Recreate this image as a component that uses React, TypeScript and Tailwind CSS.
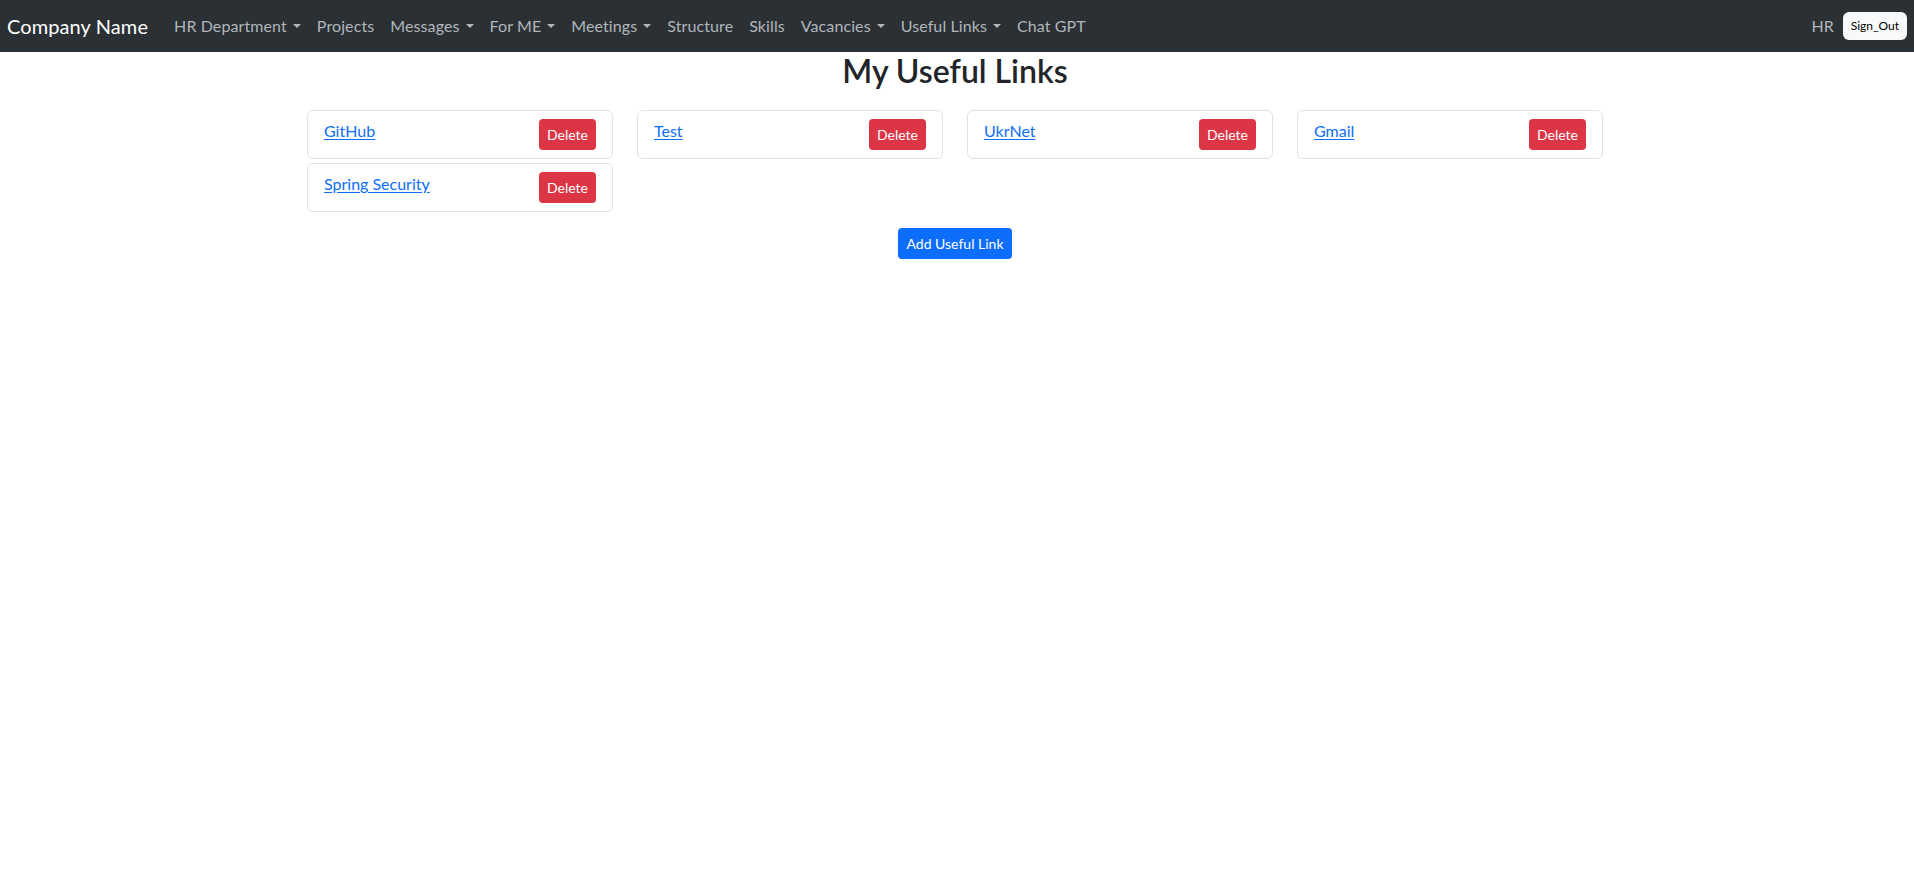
import React from 'react';

const NAV_ITEMS: { label: string; dropdown?: boolean }[] = [
  { label: 'HR Department', dropdown: true },
  { label: 'Projects' },
  { label: 'Messages', dropdown: true },
  { label: 'For ME', dropdown: true },
  { label: 'Meetings', dropdown: true },
  { label: 'Structure' },
  { label: 'Skills' },
  { label: 'Vacancies', dropdown: true },
  { label: 'Useful Links', dropdown: true },
  { label: 'Chat GPT' },
];

const LINKS = ['GitHub', 'Test', 'UkrNet', 'Gmail', 'Spring Security'];

const Caret = () => (
  <span className="ml-[6px] inline-block align-[4px] w-0 h-0 border-t-[4px] border-x-[4px] border-x-transparent border-t-current" />
);

const Navbar = () => (
  <nav className="h-[52px] bg-[#2b3035] flex items-center justify-between px-[7px]">
    <div className="flex items-center">
      <a href="#" className="text-[20px] leading-[30px] text-white mr-[18px] tracking-[0.1px]">
        Company Name
      </a>
      <ul className="flex items-center">
        {NAV_ITEMS.map(item => (
          <li key={item.label}>
            <a href="#" className="block px-2 text-[16px] leading-6 text-[#b1b6ba] tracking-[0.1px]">
              {item.label}
              {item.dropdown && <Caret />}
            </a>
          </li>
        ))}
      </ul>
    </div>
    <div className="flex items-center">
      <span className="text-[16px] leading-6 text-[#b1b6ba]">HR</span>
      <button className="ml-[9px] h-[28px] px-2 rounded-[6px] bg-[#f8f9fa] text-black text-[12px] font-normal">
        Sign_Out
      </button>
    </div>
  </nav>
);

const LinkCard = ({ name }: { name: string }) => (
  <div className="border border-[#dee2e6] rounded-[6px] bg-white px-4 py-2 flex justify-between items-start">
    <a href="#" className="text-[16px] leading-6 text-[#0d6efd] underline underline-offset-[2px]">
      {name}
    </a>
    <button className="h-[31px] px-2 rounded-[4px] bg-[#dc3545] text-white text-[14px]">
      Delete
    </button>
  </div>
);

export default function App() {
  return (
    <div className="min-h-screen bg-white font-['Lato','Noto_Sans',sans-serif] text-[#212529]">
      <Navbar />
      <main className="pr-1">
        <div className="w-[1296px] mx-auto">
          <h2 className="text-center text-[32px] leading-[38px] font-semibold mb-[20px]">
            My Useful Links
          </h2>
          <div className="grid grid-cols-4 gap-x-6 gap-y-[4px]">
            {LINKS.map(link => (
              <LinkCard key={link} name={link} />
            ))}
          </div>
          <div className="flex justify-center mt-[16px]">
            <button className="h-[31px] px-2 rounded-[4px] bg-[#0d6efd] text-white text-[14px]">
              Add Useful Link
            </button>
          </div>
        </div>
      </main>
    </div>
  );
}
